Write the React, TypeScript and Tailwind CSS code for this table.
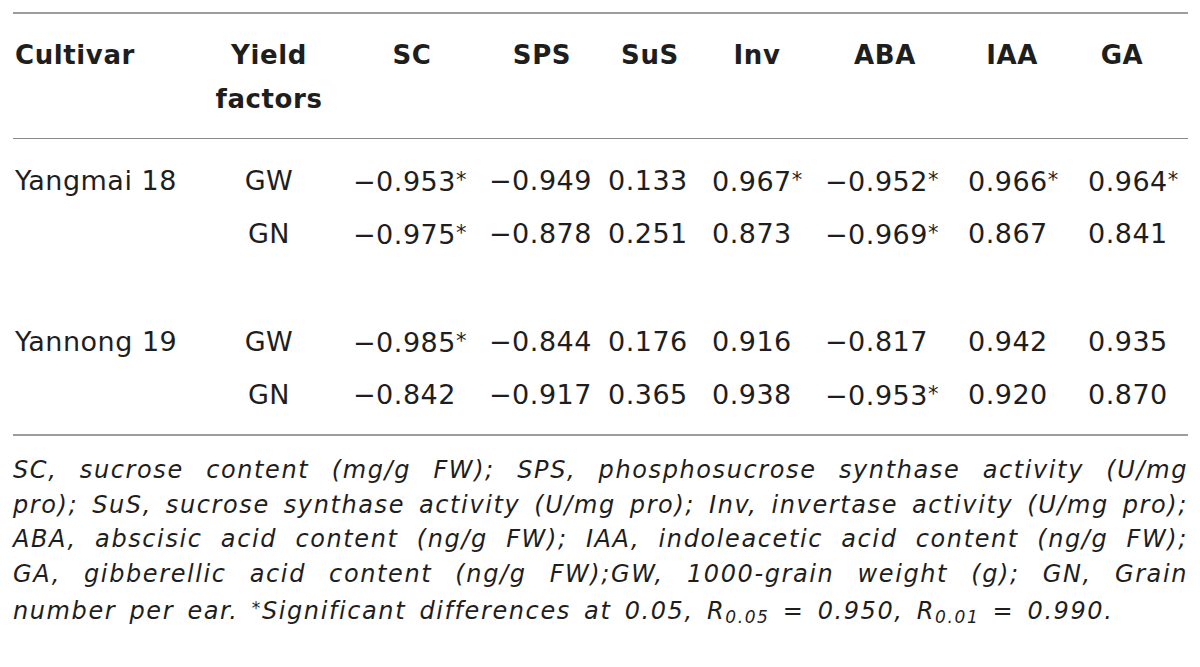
const font = "font-['DejaVu_Sans',sans-serif]";

const heads = [
  { label: "SC", w: "w-[118px]" },
  { label: "SPS", w: "w-[106px]" },
  { label: "SuS", w: "w-[84px]" },
  { label: "Inv", w: "w-[90px]" },
  { label: "ABA", w: "w-[120px]" },
  { label: "IAA", w: "w-[88px]" },
  { label: "GA", w: "w-[68px]" },
];

const groups = [
  {
    cultivar: "Yangmai 18",
    rows: [
      { factor: "GW", values: ["−0.953*", "−0.949", "0.133", "0.967*", "−0.952*", "0.966*", "0.964*"] },
      { factor: "GN", values: ["−0.975*", "−0.878", "0.251", "0.873", "−0.969*", "0.867", "0.841"] },
    ],
  },
  {
    cultivar: "Yannong 19",
    rows: [
      { factor: "GW", values: ["−0.985*", "−0.844", "0.176", "0.916", "−0.817", "0.942", "0.935"] },
      { factor: "GN", values: ["−0.842", "−0.917", "0.365", "0.938", "−0.953*", "0.920", "0.870"] },
    ],
  },
];

const gridCols = "grid grid-cols-[198px_140px_136px_119px_104px_113px_143px_120px_100px]";

function Value({ v }: { v: string }) {
  const star = v.endsWith("*");
  return (
    <div className="whitespace-nowrap">
      {star ? v.slice(0, -1) : v}
      {star && <span className="text-[21px] align-[4px]">*</span>}
    </div>
  );
}

export default function App() {
  return (
    <div className={`w-[1200px] h-[667px] bg-white overflow-hidden pt-[12px] text-[#1e1e1e] ${font}`}>
      <div className="ml-[13px] w-[1175px]">
        {/* header */}
        <div className="border-t-2 border-[#9d9d9d] pt-[19px] pb-[17px] border-b border-b-[#8a8a8a]">
          <div className={`${gridCols} pl-[2px] text-[26px] font-bold leading-[44px] tracking-[0.6px]`}>
            <div>Cultivar</div>
            <div className="w-[112px] text-center">
              Yield
              <br />
              factors
            </div>
            {heads.map((h) => (
              <div key={h.label} className={`${h.w} text-center`}>
                {h.label}
              </div>
            ))}
          </div>
        </div>

        {/* body */}
        <div className="pt-[15px] pb-[13px] border-b-2 border-[#9d9d9d] flex flex-col gap-[55px] text-[27px] tracking-[0.5px]">
          {groups.map((g) => (
            <div key={g.cultivar}>
              {g.rows.map((r, i) => (
                <div key={r.factor} className={`${gridCols} pl-[2px] h-[53px] leading-[53px]`}>
                  <div>{i === 0 ? g.cultivar : ""}</div>
                  <div className="w-[112px] text-center">{r.factor}</div>
                  {r.values.map((v, j) => (
                    <Value key={j} v={v} />
                  ))}
                </div>
              ))}
            </div>
          ))}
        </div>

        {/* footnote */}
        <div className="pt-[17px] italic text-[24px] leading-[34.5px] tracking-[1.6px]">
          <div className="text-justify [text-align-last:justify]">
            SC, sucrose content (mg/g FW); SPS, phosphosucrose synthase activity (U/mg
          </div>
          <div className="text-justify [text-align-last:justify]">
            pro); SuS, sucrose synthase activity (U/mg pro); Inv, invertase activity (U/mg pro);
          </div>
          <div className="text-justify [text-align-last:justify]">
            ABA, abscisic acid content (ng/g FW); IAA, indoleacetic acid content (ng/g FW);
          </div>
          <div className="text-justify [text-align-last:justify]">
            GA, gibberellic acid content (ng/g FW);GW, 1000-grain weight (g); GN, Grain
          </div>
          <div className="whitespace-nowrap [word-spacing:4px]">
            number per ear. <span className="text-[17px] align-[5px]">*</span>Significant differences at 0.05, R
            <sub className="text-[17px]">0.05</sub> = 0.950, R<sub className="text-[17px]">0.01</sub> = 0.990.
          </div>
        </div>
      </div>
    </div>
  );
}
